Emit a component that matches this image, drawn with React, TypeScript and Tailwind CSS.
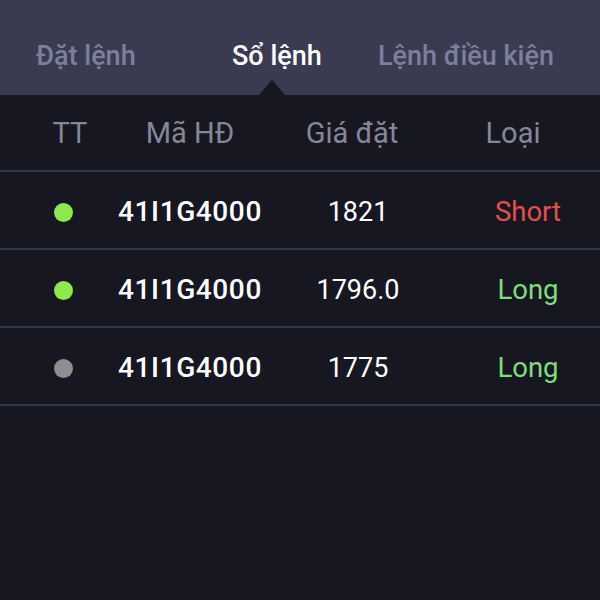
import React from "react";

const tabs = [
  { label: "Đặt lệnh", active: false },
  { label: "Sổ lệnh", active: true },
  { label: "Lệnh điều kiện", active: false },
];

const orders = [
  { live: true, code: "41I1G4000", price: "1821", side: "Short" },
  { live: true, code: "41I1G4000", price: "1796.0", side: "Long" },
  { live: false, code: "41I1G4000", price: "1775", side: "Long" },
];

const App = () => {
  return (
    <div
      className="w-[600px] h-[600px] bg-[#171722] overflow-hidden"
      style={{ fontFamily: "Roboto, 'Noto Sans', sans-serif" }}
    >
      {/* tabs */}
      <div className="h-[95px] bg-[#3a3a51] flex items-center pt-[18px]">
        <div className="w-[180px] pl-[36px] text-[27px] text-[#7c809c] font-medium">
          {tabs[0].label}
        </div>
        <div className="relative w-[198px] h-full flex items-center pl-[52px] text-[27px] text-white font-medium">
          {tabs[1].label}
          <span className="absolute left-[79px] bottom-0 w-0 h-0 border-x-[13px] border-x-transparent border-b-[15px] border-b-[#171722]" />
        </div>
        <div className="text-[27px] text-[#7c809c] font-medium">{tabs[2].label}</div>
      </div>

      {/* table header */}
      <div className="grid grid-cols-[126px_128px_202px_1fr] items-center h-[77px] pt-[3px] text-[29px] text-[#858799] border-b-2 border-[#33364a]">
        <div className="pl-[14px] text-center">TT</div>
        <div className="text-center">Mã HĐ</div>
        <div className="text-center pr-[6px]">Giá đặt</div>
        <div className="text-center pr-[30px]">Loại</div>
      </div>

      {orders.map((o, i) => (
        <div
          key={i}
          className="grid grid-cols-[126px_128px_202px_1fr] items-center h-[78px] pt-[4px] border-b-2 border-[#33364a]"
        >
          <div className="flex justify-center">
            <span
              className={`w-[19px] h-[19px] rounded-full ${o.live ? "bg-[#8fe84d]" : "bg-[#8e8e90]"}`}
            />
          </div>
          <div className="flex justify-center whitespace-nowrap text-[28px] font-medium text-white tracking-[0.6px]">
            {o.code}
          </div>
          <div className="text-center pl-[6px] text-[27px] text-white">{o.price}</div>
          <div
            className={`text-center text-[27.5px] ${o.side === "Short" ? "text-[#e0514d]" : "text-[#7fdc7c]"}`}
          >
            {o.side}
          </div>
        </div>
      ))}
    </div>
  );
};

export default App;
